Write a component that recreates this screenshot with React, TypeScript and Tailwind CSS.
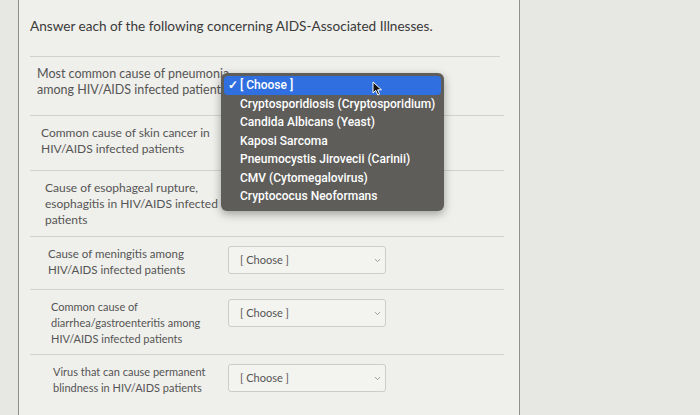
import { ChevronDown } from "lucide-react";

type Row = { lines: string[]; pl: string; h: string; size: string; covered?: boolean };

const rows: Row[] = [
    { lines: ["Most common cause of pneumonia", "among HIV/AIDS infected patients"], pl: "pl-[7px]", h: "h-[59px]", size: "text-[12.5px]", covered: true },
    { lines: ["Common cause of skin cancer in", "HIV/AIDS infected patients"], pl: "pl-[11px]", h: "h-[55px]", size: "text-[12px]", covered: true },
    { lines: ["Cause of esophageal rupture,", "esophagitis in HIV/AIDS infected", "patients"], pl: "pl-[15px]", h: "h-[66px]", size: "text-[12px]", covered: true },
    { lines: ["Cause of meningitis among", "HIV/AIDS infected patients"], pl: "pl-[18px]", h: "h-[53px]", size: "text-[11.5px]" },
    { lines: ["Common cause of", "diarrhea/gastroenteritis among", "HIV/AIDS infected patients"], pl: "pl-[21px]", h: "h-[65px]", size: "text-[11px]" },
    { lines: ["Virus that can cause permanent", "blindness in HIV/AIDS patients"], pl: "pl-[23px]", h: "h-[70px]", size: "text-[11px]" },
];

const options = [
    "Cryptosporidiosis (Cryptosporidium)",
    "Candida Albicans (Yeast)",
    "Kaposi Sarcoma",
    "Pneumocystis Jirovecii (Carinii)",
    "CMV (Cytomegalovirus)",
    "Cryptococus Neoformans",
];

const Select = () => (
    <div className="w-[158px] h-[28px] shrink-0 mr-[118px] flex items-center justify-between pl-[11px] pr-[3px] bg-[#f3f3ef] border border-[#cdcdc8] rounded-[3px]">
        <span className="text-[11px] text-[#555]">[ Choose ]</span>
        <ChevronDown size={9} strokeWidth={2.2} className="text-[#8a8a88]" />
    </div>
);

const App = () => {
    return (
        <div className="w-[700px] h-[415px] overflow-hidden bg-[#e7e7e3] flex font-['Lato',sans-serif]">
            <div className="relative ml-[18px] w-[502px] h-full bg-[#efefeb] border-x border-[#8f8f8b] flex flex-col">
                <p className="shrink-0 pt-[16px] h-[57px] ml-[11px] mr-[19px] text-[13.6px] text-[#3a3a3a] border-b border-[#d2d2cd]">
                    Answer each of the following concerning AIDS-Associated Illnesses.
                </p>

                {rows.map((r, i) => (
                    <div key={i} className={`${r.h} ${r.pl} ml-[11px] mr-[15px] pt-[9px] flex items-start border-b border-[#d2d2cd] shrink-0`}>
                        <div className={`flex-1 ${r.size} leading-[16px] text-[#555] whitespace-nowrap`}>
                            {r.lines.map((l) => (
                                <div key={l}>{l}</div>
                            ))}
                        </div>
                        {/* selects of the first rows sit under the open list */}
                        {r.covered ? <div className="w-[158px] mr-[118px] shrink-0" /> : <Select />}
                    </div>
                ))}

                {/* open native dropdown */}
                <div className="absolute left-[202px] top-[73px] w-[223px] h-[138px] bg-[#5e5d5a] rounded-[6px] shadow-[0_3px_10px_rgba(0,0,0,0.35)] p-[3px] font-['Roboto',sans-serif] font-medium text-[12px] text-white">
                    <div className="h-[18.5px] flex items-center bg-[#2f6fe0] rounded-[4px]">
                        <span className="w-[16px] pl-[2px] text-center text-[12px] font-bold">✓</span>
                        <span>[ Choose ]</span>
                    </div>
                    {options.map((o) => (
                        <div key={o} className="h-[18.5px] flex items-center pl-[16px]">
                            {o}
                        </div>
                    ))}
                </div>

                {/* mouse pointer */}
                <svg className="absolute left-[353px] top-[81px]" width="11" height="15" viewBox="0 0 11 15">
                    <path d="M1 1 L1 12 L3.8 9.4 L5.8 14 L7.6 13.2 L5.7 8.8 L9.5 8.8 Z" fill="#111" stroke="#fff" strokeWidth="1" strokeLinejoin="round" />
                </svg>
            </div>
        </div>
    );
};

export default App;
